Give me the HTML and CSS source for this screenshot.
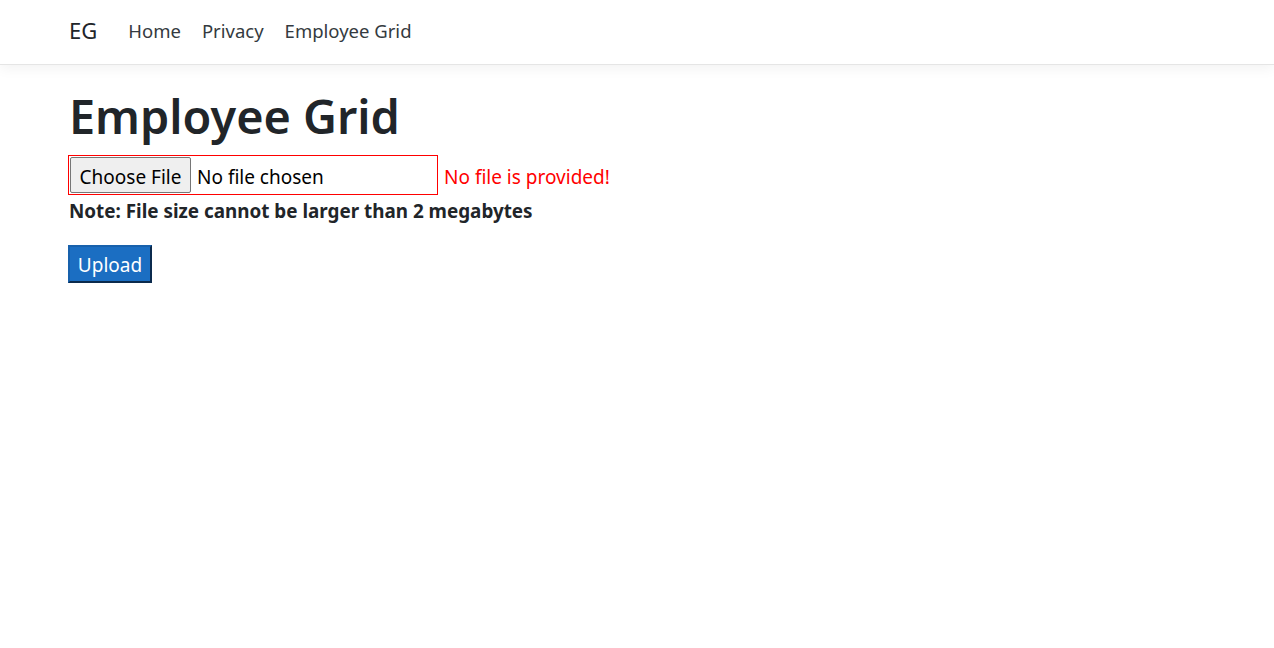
FILE: index.html
```html
<!DOCTYPE html>
<html lang="en">
<head>
<meta charset="utf-8">
<title>Employee Grid</title>
<link rel="stylesheet" href="styles.css">
</head>
<body>
<header class="navbar">
  <div class="container nav-inner">
    <a class="brand" href="#">EG</a>
    <nav class="nav-links">
      <a class="nav-link" href="#">Home</a>
      <a class="nav-link" href="#">Privacy</a>
      <a class="nav-link" href="#">Employee Grid</a>
    </nav>
  </div>
</header>
<main class="container main">
  <h1 class="title">Employee Grid</h1>
  <form class="upload-form">
    <div class="file-row">
      <div class="file-box">
        <span class="file-btn">Choose File</span>
        <span class="file-name">No file chosen</span>
      </div>
      <span class="error">No file is provided!</span>
    </div>
    <p class="note">Note: File size cannot be larger than 2 megabytes</p>
    <button type="button" class="upload-btn">Upload</button>
  </form>
</main>
</body>
</html>
```
FILE: styles.css
```css
html, body {
  margin: 0;
  padding: 0;
  background: #fff;
}
body {
  font-family: "Noto Sans", "Open Sans", sans-serif;
  color: #212529;
}
.container {
  padding-left: 69px;
  padding-right: 69px;
}
.navbar {
  box-sizing: border-box;
  height: 65px;
  border-bottom: 1px solid #e5e5e5;
  box-shadow: 0 4px 12px rgba(0, 0, 0, 0.05);
  display: flex;
  align-items: center;
  padding-bottom: 4px;
}
.nav-inner {
  display: flex;
  align-items: center;
}
.brand {
  font-size: 22px;
  color: #212529;
  text-decoration: none;
  margin-right: 31px;
}
.nav-links {
  display: flex;
  gap: 21px;
}
.nav-link {
  font-size: 18.5px;
  color: #343a40;
  text-decoration: none;
}
.main {
  padding-top: 23px;
}
.title {
  font-size: 46.8px;
  font-weight: 600;
  line-height: 1.2;
  margin: 0 0 11px 0;
}
.upload-form {
  margin: 0;
}
.file-row {
  display: flex;
  align-items: center;
}
.file-box {
  box-sizing: border-box;
  width: 370px;
  height: 40px;
  border: 1px solid #ff0000;
  display: flex;
  align-items: center;
  padding-left: 1px;
  margin-left: -1px;
}
.file-btn {
  box-sizing: border-box;
  height: 36px;
  width: 121px;
  background: #efefef;
  border: 1px solid #767676;
  border-radius: 2px;
  display: flex;
  align-items: center;
  justify-content: center;
  font-size: 19px;
  color: #000;
  padding-top: 3px;
}
.file-name {
  font-size: 19px;
  margin-left: 6px;
  color: #000;
  padding-top: 4px;
}
.error {
  color: #ff0000;
  font-size: 19px;
  margin-left: 6px;
  padding-top: 4px;
}
.note {
  font-weight: 700;
  font-size: 18.85px;
  margin: 3px 0 21px 0;
}
.upload-btn {
  box-sizing: border-box;
  width: 84px;
  height: 38px;
  margin-left: -1px;
  font-family: inherit;
  font-size: 19px;
  color: #fff;
  background: #1b6ec2;
  border-width: 2px;
  border-style: solid;
  border-color: #1861ac #0b2a4d #0b2a4d #1861ac;
  padding: 2px 0 0 0;
}
```
